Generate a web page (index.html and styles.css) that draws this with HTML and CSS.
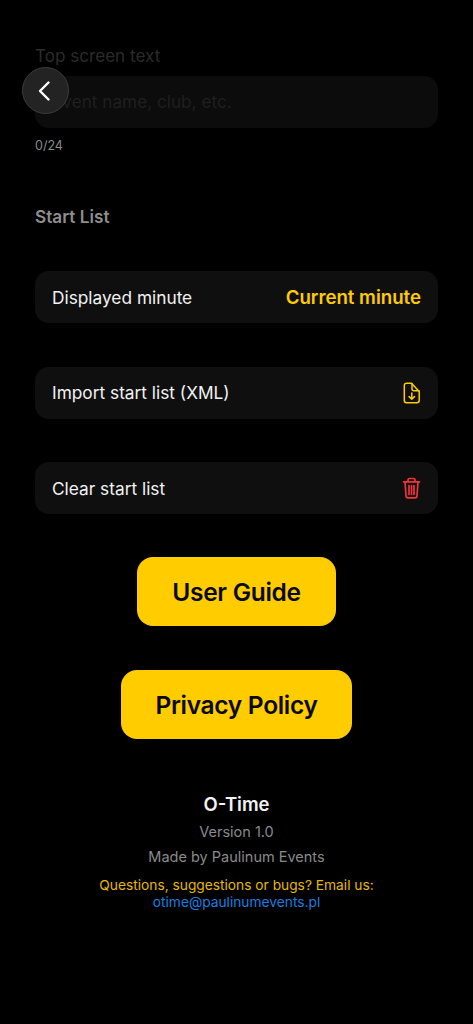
FILE: index.html
```
<!DOCTYPE html>
<html lang="en">
<head>
<meta charset="utf-8">
<title>O-Time Settings</title>
<link rel="stylesheet" href="styles.css">
</head>
<body>
<button class="back" aria-label="Back">
<svg width="18" height="22" viewBox="0 0 18 22" fill="none" stroke="#fff" stroke-width="2.4" stroke-linecap="round" stroke-linejoin="round"><path d="M11.500 2.500 L3 11 L11.500 19.500"/></svg>
</button>
<main class="page">
<section class="field">
<div class="field-label">Top screen text</div>
<div class="input">Event name, club, etc.</div>
<div class="counter">0/24</div>
</section>
<h2 class="section-title">Start List</h2>
<div class="rows">
<div class="row"><span>Displayed minute</span><span class="row-value">Current minute</span></div>
<div class="row"><span>Import start list (XML)</span>
<svg class="icon" width="20" height="22" viewBox="0 0 20 22" fill="none" stroke="#ffcc00" stroke-width="1.500" stroke-linecap="round" stroke-linejoin="round"><path d="M10.500 1.200H5.500A2.200 2.200 0 0 0 3.300 3.400V18.600A2.200 2.200 0 0 0 5.500 20.800H16A2.200 2.200 0 0 0 18.200 18.600V9.400Z"/><path d="M11 1.500V6.700A2 2 0 0 0 13 8.700H18"/><path d="M10.800 11V17.300M8.100 14.600L10.800 17.300L13.500 14.600"/></svg>
</div>
<div class="row"><span>Clear start list</span>
<svg class="icon" width="20" height="22" viewBox="0 0 20 22" fill="none" stroke="#f0343c" stroke-width="1.700" stroke-linecap="round" stroke-linejoin="round"><path d="M2.500 4.800H18.500"/><path d="M7 4.500V3A1.500 1.500 0 0 1 8.500 1.500H12.500A1.500 1.500 0 0 1 14 3V4.500"/><path d="M4 5L5 18.800A2 2 0 0 0 7 20.800H14A2 2 0 0 0 16 18.800L17 5"/><path d="M8 8.500V17.500M10.500 8.500V17.500M13 8.500V17.500"/></svg>
</div>
</div>
<div class="actions">
<a class="action action-guide">User Guide</a>
<a class="action action-privacy">Privacy Policy</a>
</div>
<footer class="about">
<div class="about-name">O-Time</div>
<div class="about-meta">Version 1.0</div>
<div class="about-meta">Made by Paulinum Events</div>
<div class="contact">Questions, suggestions or bugs? Email us:<br><span class="mail">otime@paulinumevents.pl</span></div>
</footer>
</main>
</body>
</html>
```

FILE: styles.css
```
* { box-sizing: border-box; }
html, body { margin: 0; padding: 0; background: #000; }
body { font-family: Inter, "Liberation Sans", sans-serif; width: 473px; height: 1024px; overflow: hidden; position: relative; color: #fff; }
.page { padding: 45px 35px 0; display: flex; flex-direction: column; }
.back { position: absolute; left: 22px; top: 67px; width: 47px; height: 47px; border-radius: 50%; background: #232323; border: 1px solid #3c3c3c; padding: 0; display: flex; align-items: center; justify-content: center; z-index: 2; }
.field-label { font-size: 17.100px; line-height: 22px; color: #2b2b2b; }
.input { margin-top: 9px; height: 52px; border-radius: 14px; background: #0c0c0c; padding: 0 17px 2px; display: flex; align-items: center; font-size: 17.200px; color: #1f1f1f; }
.counter { margin-top: 10px; font-size: 12.500px; line-height: 15px; color: #8a8a8a; }
.section-title { margin: 54px 0 0; font-size: 17.200px; line-height: 20px; font-weight: 600; color: #8e8e8e; }
.rows { margin-top: 44px; display: flex; flex-direction: column; gap: 43.500px; }
.row { height: 52px; border-radius: 14px; background: #0f0f0f; padding: 0 17px; display: flex; align-items: center; justify-content: space-between; font-size: 17.300px; color: #f2f2f2; }
.row-value { font-size: 18.650px; font-weight: 600; color: #ffcc00; }
.icon { flex: none; }
.actions { margin-top: 43px; display: flex; flex-direction: column; align-items: center; gap: 44px; }
.action { height: 69px; border-radius: 16px; background: #ffcc00; color: #0a0a0a; font-size: 24.500px; font-weight: 600; letter-spacing: -0.3px; display: flex; align-items: center; justify-content: center; }
.action-guide { width: 199px; }
.action-privacy { width: 231px; }
.about { margin-top: 53px; text-align: center; }
.about-name { font-size: 18.500px; line-height: 24px; font-weight: 600; color: #f2f2f2; }
.about-meta { margin-top: 6px; font-size: 14.500px; line-height: 20px; color: #8a8a8a; }
.about-meta + .about-meta { margin-top: 5px; }
.contact { margin-top: 10px; font-size: 13.750px; line-height: 16.500px; color: #e6b800; }
.mail { color: #1a7fe0; }
```
